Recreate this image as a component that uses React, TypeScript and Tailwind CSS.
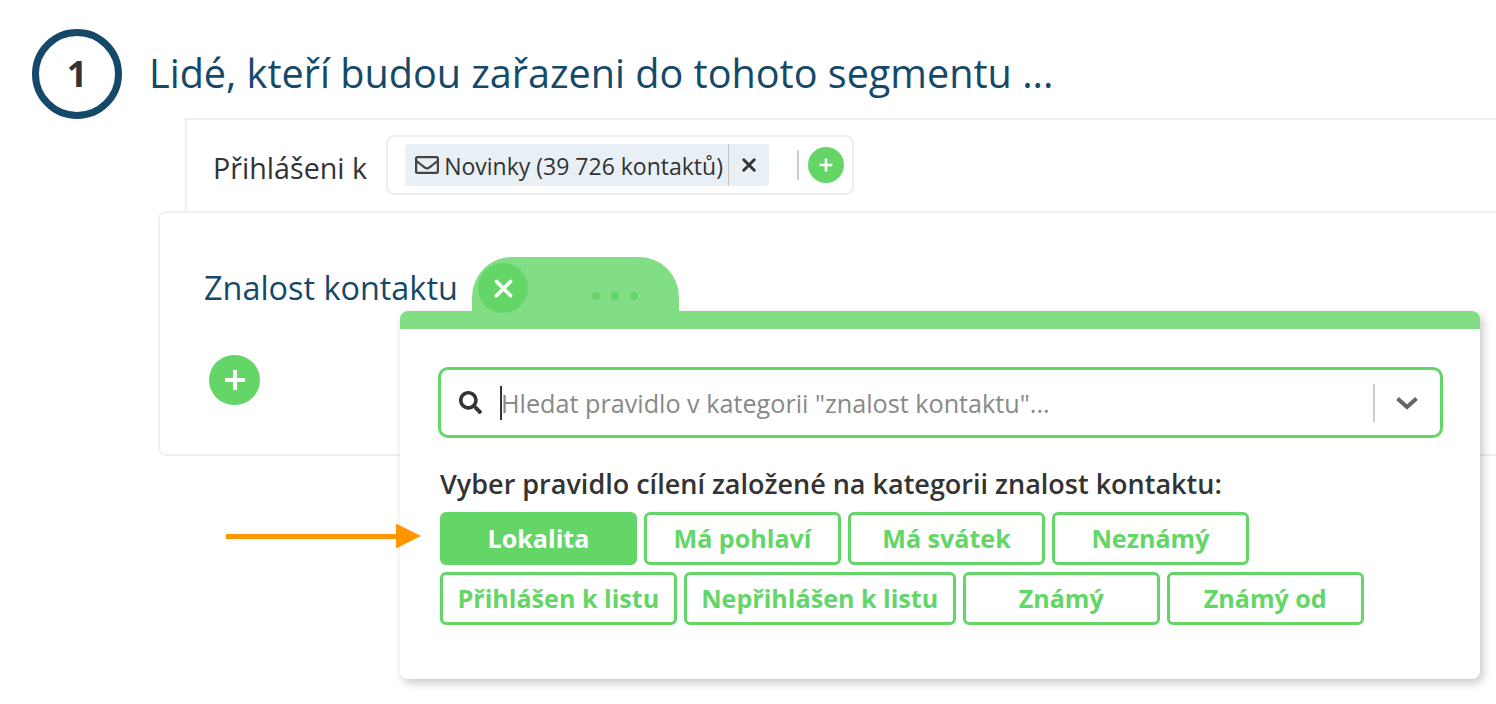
import { FaRegEnvelope, FaSearch } from "react-icons/fa";

const Plus = ({ s, w }: { s: number; w: number }) => (
  <svg width={s} height={s} viewBox="0 0 24 24" stroke="white" strokeWidth={w} fill="none">
    <path d="M12 1V23M1 12H23" />
  </svg>
);

const Cross = ({ s, w, c }: { s: number; w: number; c: string }) => (
  <svg width={s} height={s} viewBox="0 0 24 24" stroke={c} strokeWidth={w} fill="none" strokeLinecap="round">
    <path d="M3 3L21 21M21 3L3 21" />
  </svg>
);

const row1 = ["Má pohlaví", "Má svátek", "Neznámý"];
const row2 = ["Přihlášen k listu", "Nepřihlášen k listu", "Známý", "Známý od"];

const Rule = ({ label }: { label: string }) => (
  <button className="h-[53px] min-w-[197px] rounded-[6px] border-[3px] border-[#63d667] bg-white px-[14.5px] text-[25.1px] font-bold leading-none text-[#63d667]">
    {label}
  </button>
);

export default function App() {
  return (
    <div className="relative h-[704px] w-[1496px] overflow-hidden bg-white font-['Open_Sans',sans-serif]">
      <div className="flex items-center gap-[27px] pl-[32px] pt-[29px]">
        <div className="flex h-[90px] w-[90px] items-center justify-center rounded-full border-[7px] border-[#15496a] text-[36px] font-bold text-[#333]">
          1
        </div>
        <h1 className="-mt-[1px] text-[39.6px] font-normal leading-none text-[#15496a]">
          Lidé, kteří budou zařazeni do tohoto segmentu ...
        </h1>
      </div>

      <div className="-mt-px ml-[185px] flex h-[95px] items-center border-y-2 border-l-2 border-y-[#eeeeee] border-l-[#f0f0f0] pl-[26px]">
        <span className="mt-[5px] text-[28.7px] leading-none text-[#333]">Přihlášeni k</span>
        <div className="-mt-px ml-[19px] flex h-[60px] w-[468px] items-center rounded-[8px] border-2 border-[#eeeeee] pl-[17px]">
          <div className="flex h-[42px] w-[364px] items-center rounded-[3px] bg-[#e8f0f6] pl-[10px] text-[#333]">
            <FaRegEnvelope className="h-[24px] w-[24px] shrink-0 text-[#444]" />
            <span className="ml-[5px] mt-[2px] whitespace-nowrap text-[23px] leading-none">Novinky (39 726 kontaktů)</span>
            <div className="ml-[5px] flex h-[42px] flex-1 items-center justify-center border-l border-[#c8c8c8]">
              <Cross s={14} w={5} c="#333" />
            </div>
          </div>
          <div className="ml-[28px] h-[30px] w-[2px] bg-[#cccccc]" />
          <div className="ml-[9px] flex h-[36px] w-[36px] items-center justify-center rounded-full bg-[#63d667]">
            <Plus s={14} w={4.5} />
          </div>
        </div>
      </div>

      <div className="-mt-[2px] ml-[158px] h-[245px] rounded-l-[8px] border-y-2 border-l-2 border-[#f0f0f0] pl-[44px] pt-[51px]">
        <div className="text-[32.4px] leading-[46px] text-[#15496a]">Znalost kontaktu</div>
        <div className="ml-[5px] mt-[45px] flex h-[50px] w-[51px] items-center justify-center rounded-full bg-[#63d667]">
          <Plus s={22} w={4.5} />
        </div>
      </div>

      <div className="absolute left-[400px] top-[257px] w-[1080px]">
        <div className="relative z-10 ml-[72px] flex h-[54px] w-[207px] rounded-t-[40px] bg-[#82de85] pl-[6px] pt-[6px]">
          <div className="relative z-10 flex h-[50px] w-[50px] items-center justify-center rounded-full bg-[#63d667]">
            <Cross s={19} w={4.5} c="white" />
          </div>
          <div className="ml-[64px] mt-[29px] flex gap-[11px]">
            <span className="h-[8px] w-[8px] rounded-full bg-[#63d667]" />
            <span className="h-[8px] w-[8px] rounded-full bg-[#63d667]" />
            <span className="h-[8px] w-[8px] rounded-full bg-[#63d667]" />
          </div>
        </div>
        <div className="h-[368px] rounded-[8px] bg-white shadow-[3px_4px_10px_rgba(0,0,0,0.22)]">
          <div className="h-[18px] rounded-t-[8px] bg-[#82de85]" />
          <div className="pl-[38px] pt-[38px]">
            <div className="flex h-[71px] w-[1005px] items-center rounded-[10px] border-[3px] border-[#63d667] pl-[18px] pr-[22px]">
              <FaSearch className="h-[23px] w-[23px] shrink-0 text-[#333]" />
              <div className="ml-[18px] h-[34px] w-[2px] bg-[#333]" />
              <span className="-ml-px mt-[2px] flex-1 text-[25.2px] leading-none text-[#888]">
                Hledat pravidlo v kategorii "znalost kontaktu"...
              </span>
              <div className="mr-[21px] h-[38px] w-[2px] bg-[#cccccc]" />
              <svg width="22" height="14" viewBox="0 0 22 14" stroke="#666" strokeWidth="4" fill="none">
                <path d="M1.5 2.5L11 11L20.5 2.5" />
              </svg>
            </div>
            <div className="ml-[2px] mt-[28px] text-[27px] font-semibold leading-[36px] text-[#333]">
              Vyber pravidlo cílení založené na kategorii znalost kontaktu:
            </div>
            <div className="ml-[2px] mt-[10px] flex gap-[7px]">
              <button className="h-[53px] w-[197px] rounded-[6px] bg-[#63d667] text-[25.1px] font-bold leading-none text-white">
                Lokalita
              </button>
              {row1.map((r) => (
                <Rule key={r} label={r} />
              ))}
            </div>
            <div className="ml-[2px] mt-[7px] flex gap-[7px]">
              {row2.map((r) => (
                <Rule key={r} label={r} />
              ))}
            </div>
          </div>
        </div>
      </div>

      <svg className="absolute left-[226px] top-[523px]" width="196" height="26" viewBox="0 0 196 26" fill="#ff9600">
        <rect x="0" y="11" width="172" height="5" />
        <path d="M170 0.5L195 13L170 25.5Z" />
      </svg>
    </div>
  );
}
